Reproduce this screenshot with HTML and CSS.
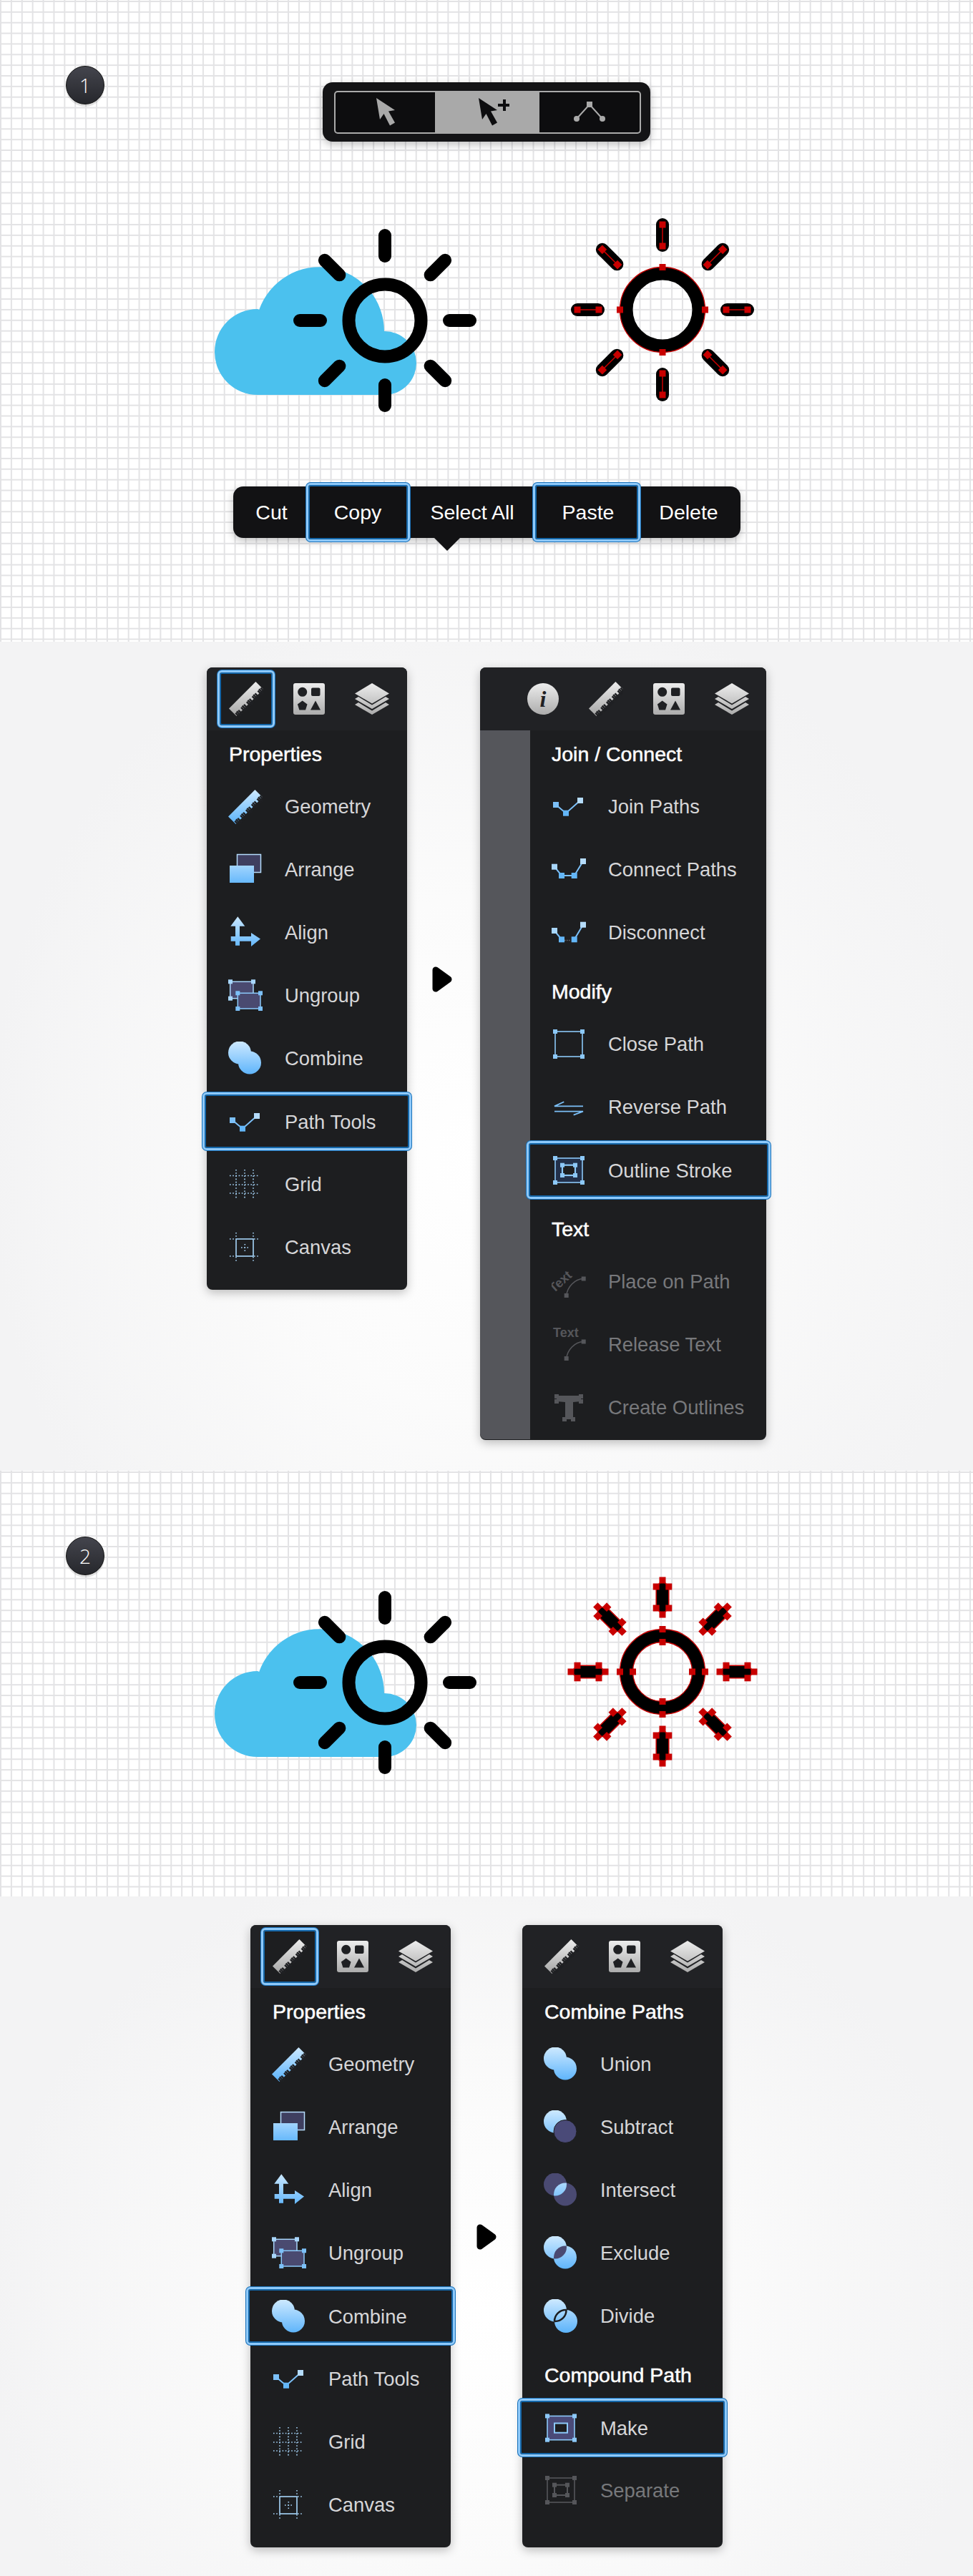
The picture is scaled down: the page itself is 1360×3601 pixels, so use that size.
FILE: index.html
```html
<!DOCTYPE html>
<html lang="en">
<head>
  <meta charset="UTF-8">
  <meta name="viewport" content="width=device-width, initial-scale=1.0">
  <title>Outline Stroke Tutorial</title>
  <link rel="stylesheet" href="styles.css">
</head>
<body>

  <!-- shared icons and artwork -->
  <svg class="defs" width="0" height="0" aria-hidden="true">
    <defs>
      <linearGradient id="gBlue" gradientUnits="userSpaceOnUse" x1="0" y1="0" x2="0" y2="48">
        <stop offset="0" stop-color="#cde9ff"/><stop offset="1" stop-color="#59b2fb"/>
      </linearGradient>
      <linearGradient id="gGray" gradientUnits="userSpaceOnUse" x1="0" y1="0" x2="0" y2="48">
        <stop offset="0" stop-color="#ededed"/><stop offset="1" stop-color="#a6a6a6"/>
      </linearGradient>
      <clipPath id="clipA"><circle cx="16" cy="15.5" r="16"/></clipPath>
      <clipPath id="clipB"><circle cx="31" cy="31" r="16"/></clipPath>

      <g id="ray"><line y1="-119" y2="-90" stroke="#000" stroke-width="18" stroke-linecap="round"/></g>
      <g id="rayNodes">
        <use href="#ray"/>
        <line y1="-119" y2="-89" stroke="#c80000" stroke-width="1.5"/>
        <rect x="-4.5" y="-123.5" width="9" height="9" fill="#c80000"/>
        <rect x="-4.5" y="-93.5" width="9" height="9" fill="#c80000"/>
      </g>
      <g id="rayOutline">
        <polygon points="0,-128 8.8,-119 8.8,-89 0,-80 -8.8,-89 -8.8,-119" fill="#000" stroke="#c80000" stroke-width="1.5"/>
        <g fill="#c80000">
          <rect x="-4.5" y="-132.5" width="9" height="9"/>
          <rect x="4.3" y="-123.5" width="9" height="9"/>
          <rect x="-13.3" y="-123.5" width="9" height="9"/>
          <rect x="4.3" y="-93.5" width="9" height="9"/>
          <rect x="-13.3" y="-93.5" width="9" height="9"/>
          <rect x="-4.5" y="-84.5" width="9" height="9"/>
        </g>
      </g>
      <g id="ringNode"><rect x="-4.5" y="-64" width="9" height="9" fill="#c80000"/></g>
      <g id="ringNodeIn"><rect x="-4.5" y="-46" width="9" height="9" fill="#c80000"/></g>

      <g id="sun">
        <circle r="50.5" fill="none" stroke="#000" stroke-width="18"/>
        <use href="#ray"/><use href="#ray" transform="rotate(45)"/><use href="#ray" transform="rotate(90)"/><use href="#ray" transform="rotate(135)"/>
        <use href="#ray" transform="rotate(180)"/><use href="#ray" transform="rotate(225)"/><use href="#ray" transform="rotate(270)"/><use href="#ray" transform="rotate(315)"/>
      </g>
      <g id="weather">
        <path d="M360 552 A60 60 0 0 1 360 432 L362.2 433 A90 90 0 0 1 537 463 A44.5 44.5 0 0 1 538 552 Z" fill="#4bc1ee"/>
        <use href="#sun" transform="translate(538 448)"/>
      </g>
      <g id="sunNodes">
        <circle r="50.5" fill="none" stroke="#000" stroke-width="18"/>
        <circle r="59.5" fill="none" stroke="#c80000" stroke-width="1.3"/>
        <use href="#ringNode"/><use href="#ringNode" transform="rotate(90)"/><use href="#ringNode" transform="rotate(180)"/><use href="#ringNode" transform="rotate(270)"/>
        <use href="#rayNodes"/><use href="#rayNodes" transform="rotate(45)"/><use href="#rayNodes" transform="rotate(90)"/><use href="#rayNodes" transform="rotate(135)"/>
        <use href="#rayNodes" transform="rotate(180)"/><use href="#rayNodes" transform="rotate(225)"/><use href="#rayNodes" transform="rotate(270)"/><use href="#rayNodes" transform="rotate(315)"/>
      </g>
      <g id="sunOutline">
        <circle r="50.5" fill="none" stroke="#000" stroke-width="18"/>
        <circle r="59.5" fill="none" stroke="#c80000" stroke-width="1.3"/>
        <circle r="41.5" fill="none" stroke="#c80000" stroke-width="1.3"/>
        <use href="#ringNode"/><use href="#ringNode" transform="rotate(90)"/><use href="#ringNode" transform="rotate(180)"/><use href="#ringNode" transform="rotate(270)"/>
        <use href="#ringNodeIn"/><use href="#ringNodeIn" transform="rotate(90)"/><use href="#ringNodeIn" transform="rotate(180)"/><use href="#ringNodeIn" transform="rotate(270)"/>
        <use href="#rayOutline"/><use href="#rayOutline" transform="rotate(45)"/><use href="#rayOutline" transform="rotate(90)"/><use href="#rayOutline" transform="rotate(135)"/>
        <use href="#rayOutline" transform="rotate(180)"/><use href="#rayOutline" transform="rotate(225)"/><use href="#rayOutline" transform="rotate(270)"/><use href="#rayOutline" transform="rotate(315)"/>
      </g>

      <symbol id="i-ruler" viewBox="0 0 48 48">
        <polygon points="37.4,0 48,10.6 10.6,48 0,37.4"/>
        <line x1="48" y1="10.6" x2="10.6" y2="48" stroke="#1f2023" stroke-width="8" stroke-dasharray="2.5 3"/>
        <line x1="46" y1="12.6" x2="12.6" y2="46" stroke="#1f2023" stroke-width="9" stroke-dasharray="2.5 8.5"/>
      </symbol>
      <symbol id="i-shapes" viewBox="0 0 44 44">
        <rect width="44" height="44" rx="3" fill="url(#gGray)"/>
        <g fill="#1f2023">
          <circle cx="12.7" cy="12.3" r="6.5"/>
          <rect x="25" y="6.5" width="12.5" height="11.5" rx="2"/>
          <polygon points="12.7,24.5 19.5,29.5 17,37.5 8.4,37.5 5.9,29.5"/>
          <polygon points="31,24.5 38,37.5 24,37.5"/>
        </g>
      </symbol>
      <symbol id="i-layers" viewBox="0 0 48 44">
        <g fill="url(#gGray)">
          <polygon points="24,0 48,14.5 24,28.5 0,14.5"/>
          <polygon points="0,22 5,19 24,30.5 43,19 48,22 24,36"/>
          <polygon points="0,30 5,27 24,38.5 43,27 48,30 24,44"/>
        </g>
      </symbol>
      <symbol id="i-info" viewBox="0 0 44 44">
        <circle cx="22" cy="22" r="22" fill="url(#gGray)"/>
        <text x="22" y="33" text-anchor="middle" class="icon-i">i</text>
      </symbol>
      <symbol id="i-arrange" viewBox="0 0 48 48">
        <rect x="12.5" y="2.5" width="33" height="25" fill="#3f3f60" stroke="#b5dcfb" stroke-width="1.5"/>
        <rect x="2" y="18" width="34" height="24" fill="url(#gBlue)"/>
      </symbol>
      <symbol id="i-align" viewBox="0 0 48 48">
        <path d="M13.3 1.3 L23.3 14.7 H16 V29 H32 V24 L45 32.5 L32 43 V35.7 H16 V41.7 H10 V35.7 H3.7 V29 H10 V14.7 H3.3 Z" fill="url(#gBlue)"/>
      </symbol>
      <symbol id="i-ungroup" viewBox="0 0 48 48">
        <rect x="2.7" y="4.3" width="32.3" height="23.4" fill="#4a4a70" stroke="#a8d6fb" stroke-width="1.5"/>
        <rect x="13.3" y="20.3" width="31.7" height="21.7" fill="#4a4a70" stroke="#8ccafb" stroke-width="1.5"/>
        <g fill="#a8d6fb">
          <rect x="0" y="1.3" width="6" height="6"/><rect x="32" y="1.3" width="6" height="6"/><rect x="0" y="24.7" width="6" height="6"/>
        </g>
        <g fill="#7cc0f8">
          <rect x="10.3" y="17.3" width="6" height="6"/><rect x="42" y="17.3" width="6" height="6"/><rect x="10.3" y="39" width="6" height="6"/><rect x="42" y="39" width="6" height="6"/>
        </g>
      </symbol>
      <symbol id="i-union" viewBox="0 0 48 48">
        <g fill="url(#gBlue)">
          <circle cx="16" cy="15.5" r="16"/><circle cx="30" cy="29.5" r="16"/>
        </g>
      </symbol>
      <symbol id="i-subtract" viewBox="0 0 48 48">
        <circle cx="16" cy="15.5" r="16" fill="url(#gBlue)"/>
        <circle cx="30" cy="29.5" r="16" fill="#4a4a78" stroke="#1d1e20" stroke-width="1"/>
      </symbol>
      <symbol id="i-intersect" viewBox="0 0 48 48">
        <circle cx="16" cy="15.5" r="16" fill="#4a4a72"/>
        <circle cx="30" cy="29.5" r="16" fill="#4a4a72"/>
        <circle cx="30" cy="29.5" r="16" fill="url(#gBlue)" clip-path="url(#clipA)"/>
      </symbol>
      <symbol id="i-exclude" viewBox="0 0 48 48">
        <circle cx="16" cy="15.5" r="16" fill="url(#gBlue)"/>
        <circle cx="30" cy="29.5" r="16" fill="url(#gBlue)"/>
        <circle cx="30" cy="29.5" r="16" fill="#4a4a72" clip-path="url(#clipA)"/>
      </symbol>
      <symbol id="i-divide" viewBox="0 0 48 48">
        <circle cx="16" cy="15.5" r="16" fill="url(#gBlue)"/>
        <circle cx="31" cy="31" r="16" fill="url(#gBlue)"/>
        <circle cx="31" cy="31" r="16" fill="none" stroke="#1d1e20" stroke-width="2.5" clip-path="url(#clipA)"/>
        <circle cx="16" cy="15.5" r="15.5" fill="none" stroke="#1d1e20" stroke-width="2.5" clip-path="url(#clipB)"/>
      </symbol>
      <symbol id="i-path" viewBox="0 0 48 48">
        <polyline points="6,21 20,32.7 40,15" fill="none" stroke="#7cc0f8" stroke-width="2"/>
        <rect x="2" y="17" width="8" height="8" fill="#7cc0f8"/>
        <rect x="16" y="28.7" width="8" height="8" fill="#63b6f8"/>
        <rect x="36" y="11" width="8" height="8" fill="#b5dcfb"/>
      </symbol>
      <symbol id="i-connect" viewBox="0 0 48 48">
        <polyline points="4,19.7 14,32 31.7,32 44,12" fill="none" stroke="#7cc0f8" stroke-width="2"/>
        <rect x="0" y="15.7" width="8" height="8" fill="#a8d6fb"/>
        <rect x="10" y="28" width="8" height="8" fill="#63b6f8"/>
        <rect x="27.7" y="28" width="8" height="8" fill="#63b6f8"/>
        <rect x="40" y="8" width="8" height="8" fill="#b5dcfb"/>
      </symbol>
      <symbol id="i-disconnect" viewBox="0 0 48 48">
        <polyline points="4,21 14,33.3" fill="none" stroke="#7cc0f8" stroke-width="2"/>
        <polyline points="31.7,33.3 44,12.7" fill="none" stroke="#7cc0f8" stroke-width="2"/>
        <line x1="18" y1="34.5" x2="27" y2="34.5" stroke="#6a6b70" stroke-width="1.3" stroke-dasharray="1.5 1.5"/>
        <rect x="0" y="17" width="8" height="8" fill="#a8d6fb"/>
        <rect x="10" y="29.3" width="8" height="8" fill="#63b6f8"/>
        <rect x="27.7" y="29.3" width="8" height="8" fill="#63b6f8"/>
        <rect x="40" y="8.7" width="8" height="8" fill="#b5dcfb"/>
      </symbol>
      <symbol id="i-grid" viewBox="0 0 48 48">
        <g stroke="#a8d6fb" stroke-width="1.6" stroke-dasharray="1.6 2.6">
          <line x1="11" y1="3" x2="11" y2="45"/><line x1="23" y1="3" x2="23" y2="45"/><line x1="35" y1="3" x2="35" y2="45"/>
          <line x1="2" y1="11.5" x2="44" y2="11.5"/><line x1="2" y1="24" x2="44" y2="24"/><line x1="2" y1="36" x2="44" y2="36"/>
        </g>
      </symbol>
      <symbol id="i-canvas" viewBox="0 0 48 48">
        <rect x="11" y="12" width="24" height="24" fill="none" stroke="#a8d6fb" stroke-width="1.6"/>
        <g stroke="#a8d6fb" stroke-width="1.6" stroke-dasharray="1.6 2.6">
          <line x1="11" y1="3" x2="11" y2="11"/><line x1="35" y1="3" x2="35" y2="11"/>
          <line x1="11" y1="37" x2="11" y2="45"/><line x1="35" y1="37" x2="35" y2="45"/>
          <line x1="2" y1="12" x2="10" y2="12"/><line x1="36" y1="12" x2="44" y2="12"/>
          <line x1="2" y1="36" x2="10" y2="36"/><line x1="36" y1="36" x2="44" y2="36"/>
          <line x1="18" y1="24" x2="29" y2="24"/><line x1="23.3" y1="19" x2="23.3" y2="29"/>
        </g>
      </symbol>
      <symbol id="i-close" viewBox="0 0 48 48">
        <rect x="5" y="6" width="38" height="35" fill="none" stroke="#8cc8f8" stroke-width="1.6"/>
        <g fill="#8cc8f8">
          <rect x="2" y="3" width="6" height="6"/><rect x="40" y="3" width="6" height="6"/><rect x="2" y="38" width="6" height="6"/><rect x="40" y="38" width="6" height="6"/>
        </g>
      </symbol>
      <symbol id="i-reverse" viewBox="0 0 48 48">
        <g fill="none" stroke="#7cc0f8" stroke-width="1.8">
          <polyline points="17.3,16.3 4,22.4 44,22.4"/>
          <polyline points="4,29.7 44,29.7 30.7,34.6"/>
        </g>
      </symbol>
      <symbol id="i-outline" viewBox="0 0 48 48">
        <rect x="5" y="6" width="38" height="34" fill="#22304a" stroke="#8cc8f8" stroke-width="1.6"/>
        <rect x="15" y="15.7" width="18" height="14.3" fill="#1d1e20" stroke="#8cc8f8" stroke-width="2.2"/>
        <g fill="#8cc8f8">
          <rect x="2" y="3" width="6" height="6"/><rect x="40" y="3" width="6" height="6"/><rect x="2" y="37" width="6" height="6"/><rect x="40" y="37" width="6" height="6"/>
          <rect x="12" y="12.7" width="6" height="6"/><rect x="30" y="12.7" width="6" height="6"/><rect x="12" y="27" width="6" height="6"/><rect x="30" y="27" width="6" height="6"/>
        </g>
      </symbol>
      <symbol id="i-make" viewBox="0 0 48 48">
        <rect x="5" y="6.4" width="38" height="33.3" fill="#4a4a78" stroke="#8cc8f8" stroke-width="1.6"/>
        <rect x="15" y="16.5" width="18" height="13.2" fill="#1d1e20" stroke="#8cc8f8" stroke-width="2"/>
        <g fill="#8cc8f8">
          <rect x="2" y="3.4" width="6" height="6"/><rect x="40" y="3.4" width="6" height="6"/><rect x="2" y="36.7" width="6" height="6"/><rect x="40" y="36.7" width="6" height="6"/>
        </g>
      </symbol>
      <symbol id="i-separate" viewBox="0 0 48 48">
        <rect x="5" y="6" width="38" height="34" fill="none" stroke="#55565a" stroke-width="1.6"/>
        <rect x="15" y="15.7" width="18" height="14.3" fill="none" stroke="#55565a" stroke-width="2"/>
        <g fill="#55565a">
          <rect x="2" y="3" width="6" height="6"/><rect x="40" y="3" width="6" height="6"/><rect x="2" y="37" width="6" height="6"/><rect x="40" y="37" width="6" height="6"/>
          <rect x="12" y="12.7" width="6" height="6"/><rect x="30" y="12.7" width="6" height="6"/><rect x="12" y="27" width="6" height="6"/><rect x="30" y="27" width="6" height="6"/>
        </g>
      </symbol>
      <symbol id="i-place" viewBox="0 0 48 48">
        <text x="0" y="0" transform="translate(3 40) rotate(-42)" class="icon-t">Text</text>
        <path d="M20.7 43 C22 31 32 20 44.7 19.5" fill="none" stroke="#55565a" stroke-width="1.6"/>
        <rect x="17.7" y="40" width="6" height="6" fill="#55565a"/>
        <rect x="41.7" y="16.5" width="6" height="6" fill="#55565a"/>
      </symbol>
      <symbol id="i-release" viewBox="0 0 48 48">
        <text x="2" y="13" class="icon-t">Text</text>
        <path d="M20.7 43 C22 31 32 20 44.7 19.5" fill="none" stroke="#55565a" stroke-width="1.6"/>
        <rect x="17.7" y="40" width="6" height="6" fill="#55565a"/>
        <rect x="41.7" y="16.5" width="6" height="6" fill="#55565a"/>
      </symbol>
      <symbol id="i-create" viewBox="0 0 48 48">
        <g fill="#55565a">
          <polygon points="7,7 41,7 41,15 30,16 30,40 19,40 19,16 7,15"/>
          <rect x="4" y="5" width="6" height="6"/><rect x="38" y="5" width="6" height="6"/><rect x="4" y="12" width="6" height="6"/><rect x="38" y="12" width="6" height="6"/>
          <rect x="15" y="37" width="6" height="6"/><rect x="27" y="37" width="6" height="6"/>
        </g>
      </symbol>
    </defs>
  </svg>

  <section class="board board-one">
    <div class="badge">1</div>

    <div class="toolbar">
      <div class="toolbar-inner">
        <div class="tool">
          <svg width="28" height="40" viewBox="0 0 28 40"><path d="M1 0 L6 30 L11.5 22 L20 38.5 L27 34.5 L18 18.5 L27 17 Z" fill="#a9a9a9"/></svg>
        </div>
        <div class="tool tool-on">
          <svg class="tool-plus" width="44" height="40" viewBox="0 0 44 40">
            <path d="M1 0 L6 30 L11.5 22 L20 38.5 L27 34.5 L18 18.5 L27 17 Z" fill="#0d0d0f"/>
            <path d="M35 2 H39 V8 H44 V12 H39 V18 H35 V12 H28 V8 H35 Z" fill="#0d0d0f"/>
          </svg>
        </div>
        <div class="tool">
          <svg width="44" height="32" viewBox="0 0 44 32">
            <polyline points="4,25 22,5 40,25" fill="none" stroke="#aaa" stroke-width="2"/>
            <rect x="18" y="1" width="8" height="8" fill="#aaa"/>
            <circle cx="4" cy="25" r="4" fill="#aaa"/><circle cx="40" cy="25" r="4" fill="#aaa"/>
          </svg>
        </div>
      </div>
    </div>

    <svg class="art art-one" viewBox="0 198 1360 482">
      <use href="#weather"/>
      <use href="#sunNodes" transform="translate(926 433)"/>
    </svg>

    <div class="menu">
      <div class="menu-item menu-cut">Cut</div>
      <div class="menu-item menu-item-on">Copy</div>
      <div class="menu-item menu-all">Select All</div>
      <div class="menu-item menu-item-on menu-paste">Paste</div>
      <div class="menu-item menu-del">Delete</div>
    </div>
  </section>

  <section class="stage stage-one">
    <div class="panel">
      <div class="tabs">
        <div class="tab tab-on"><svg class="ic ic-tab"><use href="#i-ruler" fill="url(#gGray)"/></svg></div>
        <div class="tab"><svg class="ic ic-sq"><use href="#i-shapes"/></svg></div>
        <div class="tab"><svg class="ic ic-layers"><use href="#i-layers"/></svg></div>
      </div>
      <h2 class="head">Properties</h2>
      <div class="row"><svg class="ic"><use href="#i-ruler" fill="url(#gBlue)"/></svg>Geometry</div>
      <div class="row"><svg class="ic"><use href="#i-arrange"/></svg>Arrange</div>
      <div class="row"><svg class="ic"><use href="#i-align"/></svg>Align</div>
      <div class="row"><svg class="ic"><use href="#i-ungroup"/></svg>Ungroup</div>
      <div class="row"><svg class="ic"><use href="#i-union"/></svg>Combine</div>
      <div class="row row-on"><svg class="ic"><use href="#i-path"/></svg>Path Tools</div>
      <div class="row"><svg class="ic"><use href="#i-grid"/></svg>Grid</div>
      <div class="row"><svg class="ic"><use href="#i-canvas"/></svg>Canvas</div>
    </div>

    <svg class="next next-one" width="28" height="36" viewBox="0 0 28 36"><polygon points="5,5 23,18 5,31" fill="#000" stroke="#000" stroke-width="9" stroke-linejoin="round"/></svg>

    <div class="panel panel-wide">
      <div class="tabs tabs-wide">
        <div class="tab"><svg class="ic ic-sq"><use href="#i-info"/></svg></div>
        <div class="tab"><svg class="ic ic-tab"><use href="#i-ruler" fill="url(#gGray)"/></svg></div>
        <div class="tab"><svg class="ic ic-sq"><use href="#i-shapes"/></svg></div>
        <div class="tab"><svg class="ic ic-layers"><use href="#i-layers"/></svg></div>
      </div>
      <div class="panel-body">
        <div class="strip"></div>
        <div class="panel-list">
          <h2 class="head head-strip">Join / Connect</h2>
          <div class="row"><svg class="ic"><use href="#i-path"/></svg>Join Paths</div>
          <div class="row"><svg class="ic"><use href="#i-connect"/></svg>Connect Paths</div>
          <div class="row"><svg class="ic"><use href="#i-disconnect"/></svg>Disconnect</div>
          <h2 class="head head-strip head-more">Modify</h2>
          <div class="row"><svg class="ic"><use href="#i-close"/></svg>Close Path</div>
          <div class="row"><svg class="ic"><use href="#i-reverse"/></svg>Reverse Path</div>
          <div class="row row-on row-strip"><svg class="ic"><use href="#i-outline"/></svg>Outline Stroke</div>
          <h2 class="head head-strip head-more">Text</h2>
          <div class="row row-off"><svg class="ic"><use href="#i-place"/></svg>Place on Path</div>
          <div class="row row-off"><svg class="ic"><use href="#i-release"/></svg>Release Text</div>
          <div class="row row-off"><svg class="ic"><use href="#i-create"/></svg>Create Outlines</div>
        </div>
      </div>
    </div>
  </section>

  <section class="board board-two">
    <div class="badge">2</div>
    <svg class="art art-two" viewBox="0 0 1360 595">
      <use href="#weather" transform="translate(0 -152)"/>
      <use href="#sunOutline" transform="translate(926 281)"/>
    </svg>
  </section>

  <section class="stage stage-two">
    <div class="panel">
      <div class="tabs">
        <div class="tab tab-on"><svg class="ic ic-tab"><use href="#i-ruler" fill="url(#gGray)"/></svg></div>
        <div class="tab"><svg class="ic ic-sq"><use href="#i-shapes"/></svg></div>
        <div class="tab"><svg class="ic ic-layers"><use href="#i-layers"/></svg></div>
      </div>
      <h2 class="head">Properties</h2>
      <div class="row"><svg class="ic"><use href="#i-ruler" fill="url(#gBlue)"/></svg>Geometry</div>
      <div class="row"><svg class="ic"><use href="#i-arrange"/></svg>Arrange</div>
      <div class="row"><svg class="ic"><use href="#i-align"/></svg>Align</div>
      <div class="row"><svg class="ic"><use href="#i-ungroup"/></svg>Ungroup</div>
      <div class="row row-on"><svg class="ic"><use href="#i-union"/></svg>Combine</div>
      <div class="row"><svg class="ic"><use href="#i-path"/></svg>Path Tools</div>
      <div class="row"><svg class="ic"><use href="#i-grid"/></svg>Grid</div>
      <div class="row"><svg class="ic"><use href="#i-canvas"/></svg>Canvas</div>
    </div>

    <svg class="next" width="28" height="36" viewBox="0 0 28 36"><polygon points="5,5 23,18 5,31" fill="#000" stroke="#000" stroke-width="9" stroke-linejoin="round"/></svg>

    <div class="panel panel-tall">
      <div class="tabs">
        <div class="tab"><svg class="ic ic-tab"><use href="#i-ruler" fill="url(#gGray)"/></svg></div>
        <div class="tab"><svg class="ic ic-sq"><use href="#i-shapes"/></svg></div>
        <div class="tab"><svg class="ic ic-layers"><use href="#i-layers"/></svg></div>
      </div>
      <h2 class="head">Combine Paths</h2>
      <div class="row"><svg class="ic"><use href="#i-union"/></svg>Union</div>
      <div class="row"><svg class="ic"><use href="#i-subtract"/></svg>Subtract</div>
      <div class="row"><svg class="ic"><use href="#i-intersect"/></svg>Intersect</div>
      <div class="row"><svg class="ic"><use href="#i-exclude"/></svg>Exclude</div>
      <div class="row"><svg class="ic"><use href="#i-divide"/></svg>Divide</div>
      <h2 class="head head-more">Compound Path</h2>
      <div class="row row-on"><svg class="ic"><use href="#i-make"/></svg>Make</div>
      <div class="row row-off"><svg class="ic"><use href="#i-separate"/></svg>Separate</div>
    </div>
  </section>

</body>
</html>
```

FILE: styles.css
```css
* {
  box-sizing: border-box;
}

body {
  margin: 0;
  width: 1360px;
  font-family: "Liberation Sans", Arial, sans-serif;
  background-color: #fff;
}

.defs {
  position: absolute;
}

.icon-i {
  font-family: "Liberation Serif", serif;
  font-style: italic;
  font-weight: bold;
  font-size: 32px;
  fill: #1f2023;
}

.icon-t {
  font-family: "Liberation Sans", sans-serif;
  font-weight: bold;
  font-size: 18px;
  fill: #55565a;
}

/* grid boards */
.board {
  position: relative;
  background-color: #fff;
  background-image:
    linear-gradient(to right, #e3e3e5 0, #e3e3e5 2px, transparent 2px),
    linear-gradient(to bottom, #e3e3e5 0, #e3e3e5 2px, transparent 2px);
  background-size: 14.9px 14.87px;
  background-position: 0 1px;
}

.board-one {
  height: 897px;
  display: flex;
  flex-direction: column;
  align-items: center;
  padding-top: 115px;
}

.board-two {
  height: 595px;
}

.art {
  display: block;
  width: 1360px;
  flex: none;
}

.art-one {
  height: 482px;
}

.art-two {
  height: 595px;
}

.badge {
  position: absolute;
  left: 92px;
  top: 92px;
  width: 54px;
  height: 54px;
  border-radius: 50%;
  border: 1px solid #111;
  background: linear-gradient(#44454d, #26272c);
  box-shadow: 0 3px 1px rgba(0, 0, 0, 0.12);
  color: #fff;
  font-family: "Open Sans", sans-serif;
  font-weight: 300;
  font-size: 28px;
  line-height: 52px;
  text-align: center;
}

/* tool switch */
.toolbar {
  width: 458px;
  height: 83px;
  padding: 12px 13px 11px 16px;
  background-color: #141416;
  border-radius: 14px;
  box-shadow: 0 4px 12px rgba(0, 0, 0, 0.25);
  flex: none;
}

.toolbar-inner {
  height: 60px;
  display: grid;
  grid-template-columns: 139px 146px 1fr;
  border: 2px solid #aaa;
  border-radius: 5px;
  overflow: hidden;
  background-color: #0d0d0f;
}

.tool {
  display: flex;
  align-items: center;
  justify-content: center;
}

.tool-on {
  background-color: #a9a9a9;
}

.tool-plus {
  margin-left: 18px;
}

/* context menu */
.menu {
  position: relative;
  flex: none;
  width: 709px;
  height: 72px;
  display: grid;
  grid-template-columns: 102px 145px 172px 150px 140px;
  background-color: #121214;
  border-radius: 14px;
  box-shadow: 0 4px 12px rgba(0, 0, 0, 0.25);
  color: #fff;
  font-size: 28.5px;
}

.menu::after {
  content: "";
  position: absolute;
  left: 281px;
  top: 72px;
  border-left: 18px solid transparent;
  border-right: 18px solid transparent;
  border-top: 18px solid #121214;
}

.menu-item {
  display: flex;
  align-items: center;
  justify-content: center;
}

.menu-cut {
  padding-left: 6px;
}

.menu-all {
  padding-left: 3px;
}

.menu-paste {
  padding-left: 5px;
}

.menu-del {
  padding-right: 4px;
}

.menu-item-on {
  margin: -5px 0;
  background-color: #121214;
  border: 3px solid #8ec9f9;
  border-radius: 6px;
  box-shadow: 0 0 0 1px #1a72ba, inset 0 0 0 2px #1466a8;
  position: relative;
  z-index: 1;
}

/* panel sections */
.stage {
  display: flex;
  justify-content: center;
  align-items: flex-start;
  background: radial-gradient(ellipse 700px 70% at 50% 62%, #fff 0, #fbfbfb 45%, #f3f3f4 100%);
}

.stage-one {
  height: 1159px;
  padding-top: 36px;
}

.stage-two {
  height: 950px;
  padding-top: 40px;
}

.next {
  flex: none;
  margin: 418px 36px 0;
}

.next-one {
  margin: 418px 39px 0 35px;
}

.panel {
  flex: none;
  width: 280px;
  padding-bottom: 15px;
  background-color: #1d1e20;
  border-radius: 8px;
  box-shadow: 0 4px 14px rgba(0, 0, 0, 0.25);
  color: #d6d6d8;
}

.panel-wide {
  width: 400px;
  padding-bottom: 1px;
}

.panel-tall {
  padding-bottom: 35px;
}

.panel-body {
  display: flex;
}

.strip {
  width: 70px;
  background-color: #55565b;
  border-bottom-left-radius: 8px;
}

.panel-list {
  flex: 1;
}

.tabs {
  height: 88px;
  padding-left: 11px;
  display: flex;
  background-color: #212225;
  border-radius: 8px 8px 0 0;
}

.tabs-wide {
  padding-left: 44px;
}

.tab {
  width: 88px;
  height: 88px;
  display: flex;
  align-items: center;
  justify-content: center;
}

.tab-on {
  width: 80px;
  height: 80px;
  margin: 4px;
  background-color: #1d1e20;
  border: 3px solid #8ec9f9;
  border-radius: 6px;
  box-shadow: 0 0 0 1px #1a72ba, inset 0 0 0 2px #1466a8;
}

.head {
  margin: 0;
  height: 63px;
  padding: 4px 0 0 31px;
  display: flex;
  align-items: center;
  color: #fff;
  font-size: 28.5px;
  font-weight: normal;
  -webkit-text-stroke: 0.5px #fff;
}

.head-strip {
  padding-left: 30px;
}

.head-more {
  height: 68px;
  padding-top: 9px;
}

.row {
  height: 88px;
  padding-left: 30px;
  display: flex;
  align-items: center;
  gap: 31px;
  font-size: 27.4px;
}

.row-on {
  position: relative;
  height: 81px;
  margin: 3px -6px 4px;
  padding: 2px 0 0 33px;
  background-color: #1d1e20;
  border: 3px solid #8ec9f9;
  border-radius: 6px;
  box-shadow: 0 0 0 1px #1a72ba, inset 0 0 0 2px #1466a8;
}

.row-strip {
  margin-left: -5px;
  padding-left: 32px;
}

.row-off {
  color: #77787b;
}

.ic {
  flex: none;
  width: 48px;
  height: 48px;
  overflow: visible;
}

.ic-sq {
  width: 44px;
  height: 44px;
}

.ic-layers {
  width: 48px;
  height: 44px;
}
```
